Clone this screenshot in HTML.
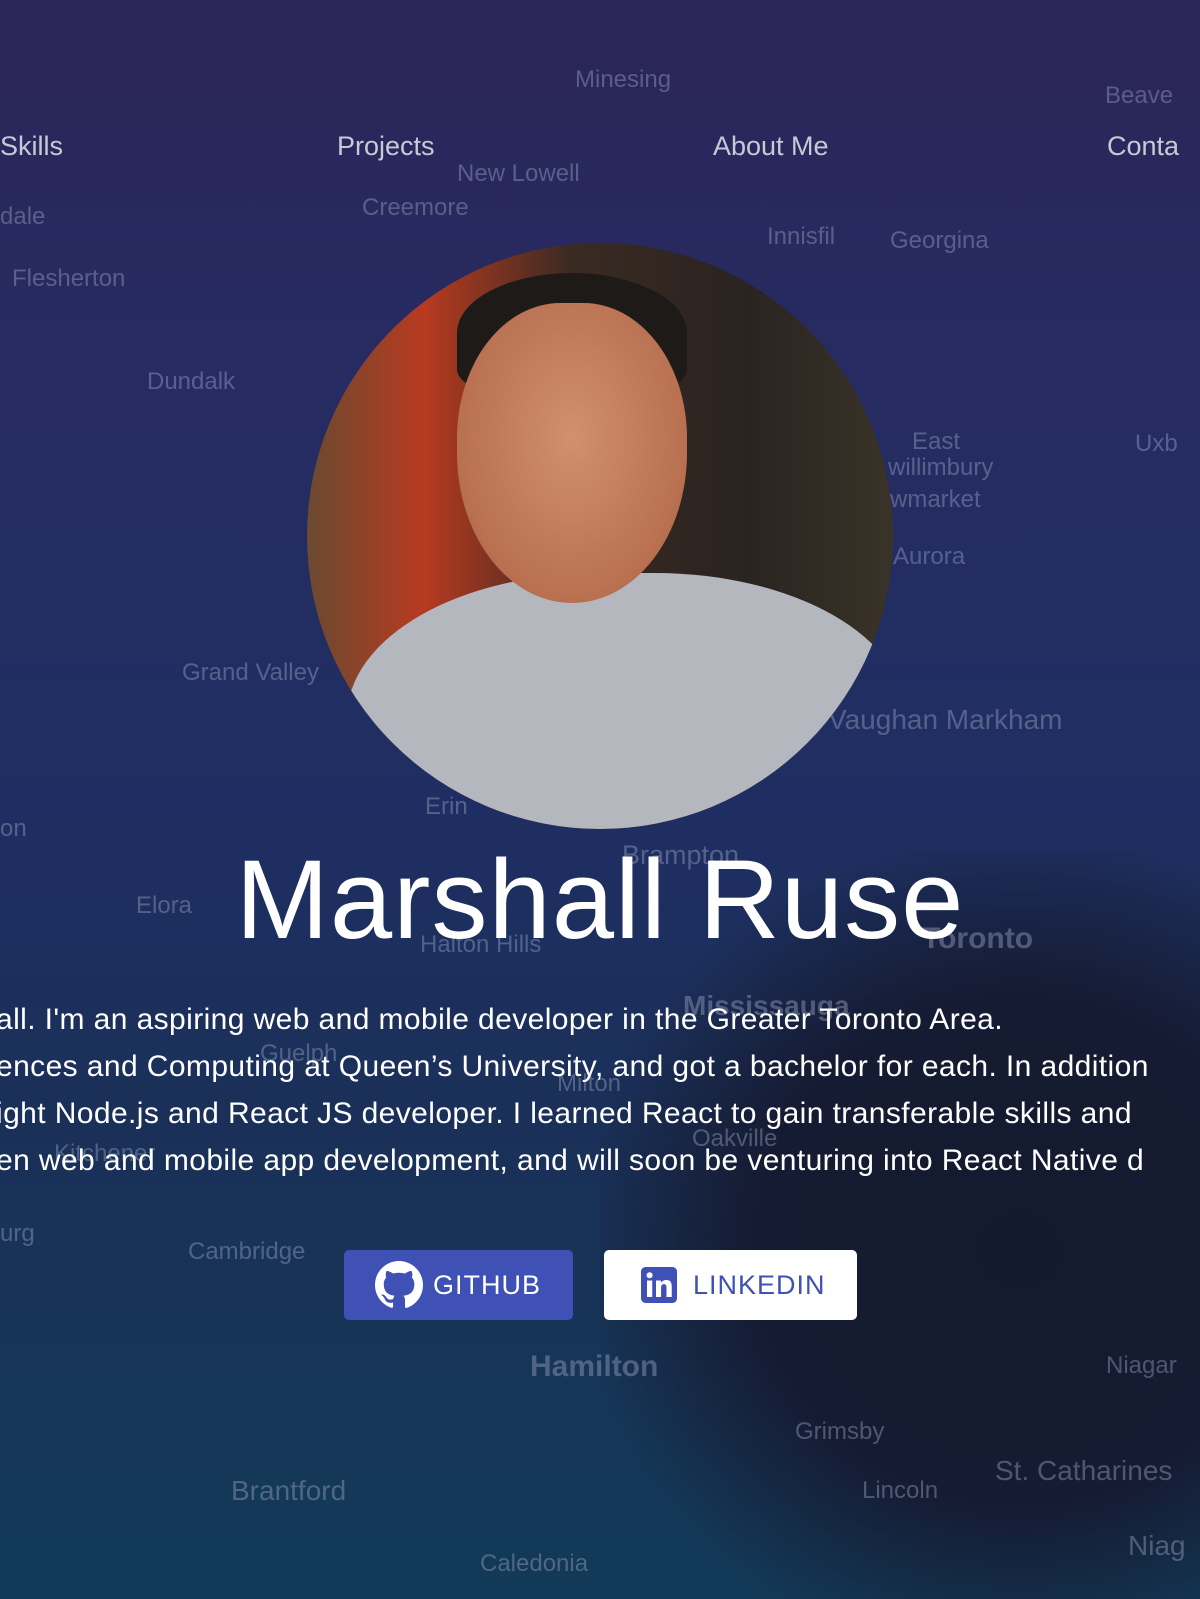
<!DOCTYPE html>
<html><head><meta charset="utf-8"><style>
html,body{margin:0;padding:0;width:1200px;height:1599px;overflow:hidden;background:#1a2d58}
body{position:relative;font-family:"Liberation Sans",sans-serif;
background:linear-gradient(180deg,#2b2558 0%,#262c62 25%,#1f2e62 50%,#1a3058 70%,#123a58 100%);}
.dark{position:absolute;left:600px;top:850px;width:700px;height:800px;background:radial-gradient(ellipse at 60% 50%,#141a2e 0%,#151b32 45%,rgba(20,26,46,0) 75%)}
.m{position:absolute;color:rgba(150,160,190,0.45);font-size:24px;white-space:nowrap}
.n{position:absolute;top:131px;color:#c9c9d6;font-size:27px;white-space:nowrap}
.photo{position:absolute;left:307px;top:243px;width:586px;height:586px;border-radius:50%;overflow:hidden;
background:linear-gradient(90deg,#6a4a30 0%,#b83a20 20%,#3a2a22 45%,#2a2320 75%,#3a3328 100%)}
.face{position:absolute;left:150px;top:60px;width:230px;height:300px;border-radius:45% 45% 50% 50%;background:radial-gradient(ellipse at 50% 45%,#d19070,#b87050 70%,#8a5038)}
.hair{position:absolute;left:150px;top:30px;width:230px;height:120px;border-radius:50% 50% 20% 20%;background:#1e1a18}
.sweater{position:absolute;left:40px;top:330px;width:560px;height:320px;border-radius:45% 45% 0 0;background:#b4b8be}
.name{position:absolute;left:0;width:1200px;top:835px;text-align:center;color:#fff;font-size:112px;font-weight:300;letter-spacing:1px}
.p{position:absolute;color:#fff;font-size:30px;letter-spacing:0.4px;white-space:nowrap}
.btn{position:absolute;top:1250px;height:70px;border-radius:5px;font-size:27px;letter-spacing:1px;display:flex;align-items:center}
</style></head><body>
<div class="dark"></div>
<div class="m" style="left:575px;top:66px">Minesing</div>
<div class="m" style="left:1105px;top:82px">Beave</div>
<div class="m" style="left:457px;top:160px">New Lowell</div>
<div class="m" style="left:0;top:203px">dale</div>
<div class="m" style="left:362px;top:194px">Creemore</div>
<div class="m" style="left:767px;top:223px">Innisfil</div>
<div class="m" style="left:890px;top:227px">Georgina</div>
<div class="m" style="left:12px;top:265px">Flesherton</div>
<div class="m" style="left:147px;top:368px">Dundalk</div>
<div class="m" style="left:912px;top:428px">East</div>
<div class="m" style="left:888px;top:454px">willimbury</div>
<div class="m" style="left:890px;top:486px">wmarket</div>
<div class="m" style="left:1135px;top:430px">Uxb</div>
<div class="m" style="left:893px;top:543px">Aurora</div>
<div class="m" style="left:182px;top:659px">Grand Valley</div>
<div class="m" style="left:828px;top:704px;font-size:28px">Vaughan Markham</div>
<div class="m" style="left:425px;top:793px">Erin</div>
<div class="m" style="left:0;top:815px">on</div>
<div class="m" style="left:622px;top:840px;font-size:27px">Brampton</div>
<div class="m" style="left:136px;top:892px">Elora</div>
<div class="m" style="left:420px;top:931px">Halton Hills</div>
<div class="m" style="left:922px;top:922px;font-size:30px;font-weight:bold">Toronto</div>
<div class="m" style="left:683px;top:990px;font-size:28px;font-weight:bold">Mississauga</div>
<div class="m" style="left:260px;top:1040px">Guelph</div>
<div class="m" style="left:557px;top:1070px">Milton</div>
<div class="m" style="left:692px;top:1125px">Oakville</div>
<div class="m" style="left:54px;top:1140px">Kitchener</div>
<div class="m" style="left:0;top:1220px">urg</div>
<div class="m" style="left:188px;top:1238px">Cambridge</div>
<div class="m" style="left:530px;top:1350px;font-size:30px;font-weight:bold">Hamilton</div>
<div class="m" style="left:1106px;top:1352px">Niagar</div>
<div class="m" style="left:795px;top:1418px">Grimsby</div>
<div class="m" style="left:995px;top:1455px;font-size:28px">St. Catharines</div>
<div class="m" style="left:231px;top:1475px;font-size:28px">Brantford</div>
<div class="m" style="left:862px;top:1477px">Lincoln</div>
<div class="m" style="left:1128px;top:1530px;font-size:28px">Niag</div>
<div class="m" style="left:480px;top:1550px">Caledonia</div>

<div class="n" style="left:0">Skills</div>
<div class="n" style="left:337px">Projects</div>
<div class="n" style="left:713px">About Me</div>
<div class="n" style="left:1107px">Conta</div>

<div class="photo"><div class="sweater"></div><div class="hair"></div><div class="face"></div></div>

<div class="name">Marshall Ruse</div>
<div class="p" style="left:-4px;top:1003px">all. I'm an aspiring web and mobile developer in the Greater Toronto Area.</div>
<div class="p" style="left:-4px;top:1050px">ences and Computing at Queen’s University, and got a bachelor for each. In addition</div>
<div class="p" style="left:-4px;top:1097px">ight Node.js and React JS developer. I learned React to gain transferable skills and</div>
<div class="p" style="left:-4px;top:1144px">en web and mobile app development, and will soon be venturing into React Native d</div>

<div class="btn" style="left:344px;width:229px;background:#3f51b5;color:#fff">
<svg style="margin-left:31px;margin-right:10px" width="48" height="48" viewBox="0 0 16 16"><path fill="#fff" d="M8 0C3.58 0 0 3.58 0 8c0 3.540 2.290 6.530 5.470 7.590.4.07.55-.17.55-.38v-1.330c-2.230.48-2.700-1.070-2.700-1.070-.36-.92-.89-1.170-.89-1.170-.73-.5.06-.49.06-.49.8.06 1.230.83 1.230.83.72 1.230 1.880.87 2.340.67.07-.52.28-.87.51-1.070-1.780-.2-3.650-.89-3.650-3.950 0-.87.31-1.590.82-2.150-.08-.2-.36-1.020.08-2.120 0 0 .67-.21 2.200.82a7.600 7.600 0 0 1 4 0c1.530-1.040 2.200-.82 2.200-.82.44 1.100.16 1.920.08 2.120.51.56.82 1.270.82 2.150 0 3.070-1.870 3.750-3.650 3.950.29.25.54.73.54 1.480v2.200c0 .21.15.46.55.38A8.010 8.010 0 0 0 16 8c0-4.420-3.580-8-8-8z"/></svg>GITHUB</div>
<div class="btn" style="left:604px;width:253px;background:#fff;color:#3f51b5">
<svg style="margin-left:37px;margin-right:16px" width="36" height="36" viewBox="0 0 24 24"><rect width="24" height="24" rx="3" fill="#3f51b5"/><rect x="4" y="9" width="3.5" height="11" fill="#fff"/><circle cx="5.75" cy="5.5" r="2" fill="#fff"/><path fill="#fff" d="M10 9h3.3v1.6c.6-1 1.8-1.9 3.6-1.9 3 0 3.6 2 3.6 4.6V20H17v-5.9c0-1.4-.1-2.7-1.7-2.7s-1.9 1.2-1.9 2.6v6H10z"/></svg>LINKEDIN</div>
</body></html>
